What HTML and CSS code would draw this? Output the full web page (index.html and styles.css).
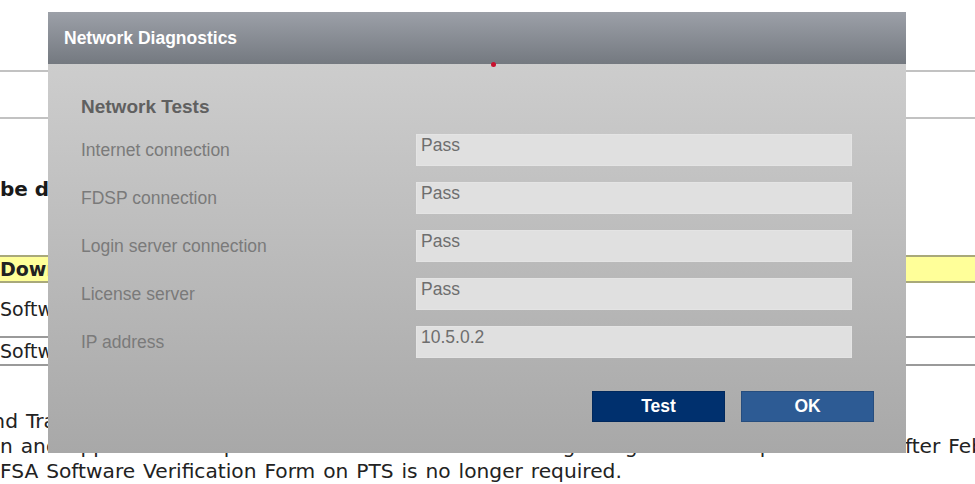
FILE: index.html
```html
<!DOCTYPE html>
<html lang="en">
<head>
    <meta charset="UTF-8">
    <meta name="viewport" content="width=device-width, initial-scale=1.0">
    <title>Network Diagnostics</title>
    <link rel="stylesheet" href="styles.css">
</head>
<body>
    <div class="page">
        <div class="topbar"></div>
        <div class="subbar"></div>

        <h3 class="notice">be downloaded</h3>

        <div class="table">
            <div class="thead">Download</div>
            <div class="trow tall">Software</div>
            <div class="trow">Software</div>
        </div>

        <div class="text">
            <p class="cut">and Training</p>
            <p>n and Approval Code process has been automated. Beginning with RC's opened on or after Feb</p>
            <p>FSA Software Verification Form on PTS is no longer required.</p>
        </div>
    </div>

    <div class="dialog">
        <div class="dialog-head">Network Diagnostics</div>
        <span class="dot"></span>

        <div class="dialog-body">
            <h2>Network Tests</h2>

            <div class="tests">
                <label>Internet connection</label>
                <div class="field">Pass</div>

                <label>FDSP connection</label>
                <div class="field">Pass</div>

                <label>Login server connection</label>
                <div class="field">Pass</div>

                <label>License server</label>
                <div class="field">Pass</div>

                <label>IP address</label>
                <div class="field">10.5.0.2</div>
            </div>

            <div class="actions">
                <button class="btn btn-test">Test</button>
                <button class="btn btn-ok">OK</button>
            </div>
        </div>
    </div>
</body>
</html>
```

FILE: styles.css
```css
body {
    margin: 0;
    background: #ffffff;
    font-family: "DejaVu Sans", Verdana, sans-serif;
    font-size: 20px;
    color: #222222;
    overflow: hidden;
}
.page {
    width: 975px;
}
.topbar {
    height: 70px;
    border-bottom: 2px solid #c2c2c2;
}
.subbar {
    height: 45px;
    border-bottom: 2px solid #c2c2c2;
}
.notice {
    margin: 59px 0 0 0;
    font-size: 20px;
    line-height: 22px;
    font-weight: bold;
    color: #1a1a1a;
}
.table {
    margin-top: 55px;
    font-size: 19px;
}
.thead {
    background: #ffff99;
    border-top: 2px solid #a9a97a;
    border-bottom: 2px solid #a9a97a;
    height: 24px;
    line-height: 25px;
    font-weight: bold;
}
.trow {
    height: 26px;
    line-height: 27px;
    border-bottom: 2px solid #9a9a9a;
}
.trow.tall {
    height: 53px;
    line-height: 52px;
}
.text {
    margin-top: 43px;
    font-size: 20.2px;
    word-spacing: 1.5px;
}
.text p {
    margin: 0;
    line-height: 25px;
    white-space: nowrap;
}
.text .cut {
    text-indent: -20px;
}

/* dialog */
.dialog {
    position: absolute;
    left: 48px;
    top: 12px;
    width: 858px;
    font-family: "Liberation Sans", Arial, sans-serif;
}
.dialog-head {
    height: 52px;
    line-height: 52px;
    padding-left: 16px;
    background: linear-gradient(#9ca0a8, #747980);
    color: #ffffff;
    font-size: 17.5px;
    font-weight: bold;
}
.dot {
    position: absolute;
    left: 443px;
    top: 50px;
    width: 5px;
    height: 5px;
    border-radius: 50%;
    background: #c8102e;
}
.dialog-body {
    padding: 32px 32px 31px 33px;
    background: linear-gradient(#cdcdcd, #a8a8a8);
}
.dialog-body h2 {
    margin: 0;
    font-size: 19px;
    line-height: 22px;
    color: #606060;
}
.tests {
    display: grid;
    grid-template-columns: 335px 436px;
    grid-auto-rows: 32px;
    row-gap: 16px;
    margin-top: 16px;
}
.tests label {
    align-self: center;
    font-size: 17.5px;
    color: #7a7a7a;
}
.field {
    background: #e0e0e0;
    border: 1px solid #e4e4e4;
    padding: 0 4px;
    font-size: 17.5px;
    line-height: 20px;
    color: #6e6e6e;
}
.actions {
    display: flex;
    justify-content: flex-end;
    gap: 16px;
    margin-top: 33px;
}
.btn {
    width: 133px;
    height: 31px;
    border: 1px solid rgba(0, 0, 0, 0.15);
    color: #ffffff;
    font-family: "Liberation Sans", Arial, sans-serif;
    font-size: 17.5px;
    font-weight: bold;
    cursor: pointer;
}
.btn-test {
    background: #00306e;
}
.btn-ok {
    background: #2d5b94;
}
```
